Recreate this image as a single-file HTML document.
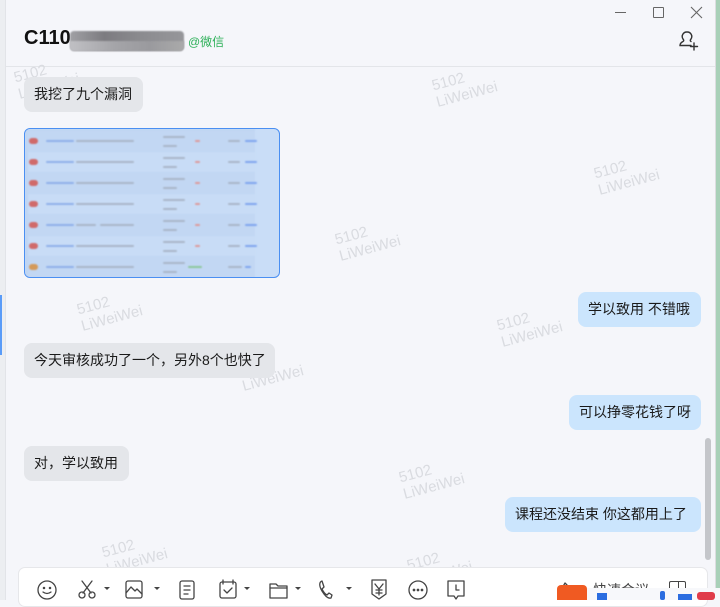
<!DOCTYPE html>
<html><head><meta charset="utf-8"><style>
*{margin:0;padding:0;box-sizing:border-box}
body{width:720px;height:600px;overflow:hidden;background:#f5f6fa;position:relative;font-family:"Liberation Sans","Noto Sans CJK SC",sans-serif}
.abs{position:absolute}
.b{position:absolute;height:35px;line-height:35px;padding:0 10px;font-size:14px;color:#1a1a1a;border-radius:8px;white-space:nowrap}
.l{background:#e4e6ea;left:24px}
.r{background:#cbe5fd;right:19px}
.wm{position:absolute;color:#d9dbe0;font-size:15px;line-height:17px;transform:rotate(-15deg);transform-origin:left top;font-family:"Liberation Sans",sans-serif}
.row{position:absolute;left:3px;width:227px;height:20px}
.row span{position:absolute;height:2px;top:9px;border-radius:1px}
.blur{filter:blur(0.7px)}
</style></head><body>
<div class="abs" style="left:0;top:0;width:6px;height:600px;background:#eceef1;border-right:1px solid #e2e4e8"></div>
<div class="abs" style="left:0;top:295px;width:2px;height:60px;background:#5a9cf8"></div>
<div class="abs" style="left:716px;top:0;width:4px;height:600px;background:#a8d0b8"></div>
<div class="abs" style="left:715px;top:0;width:1px;height:600px;background:#dcdde0"></div>

<div class="abs" style="left:615px;top:12px;width:11px;height:1px;background:#666"></div>
<div class="abs" style="left:653px;top:7px;width:11px;height:11px;border:1px solid #666;border-radius:1px"></div>
<svg class="abs" style="left:690px;top:6px" width="13" height="13"><path d="M1 1L12 12M12 1L1 12" stroke="#666" stroke-width="1.1"/></svg>
<svg class="abs" style="left:678px;top:30px" width="24" height="22" viewBox="0 0 24 22"><path d="M9 2a4.5 4.5 0 0 1 4 7c-1 1.2-1 2 0 2.5M9 2a4.5 4.5 0 0 0-4 7c1 1.2 1 2 0 2.5C3 12.5 2 14 2 15.5H13M16 13v7M12.5 16.5h7" stroke="#333" stroke-width="1.4" fill="none" stroke-linecap="round"/></svg>

<div class="abs" style="left:24px;top:27px;font-size:20px;font-weight:bold;color:#111">C110</div>
<div class="abs blur" style="left:70px;top:31px;width:114px;height:20px;background:linear-gradient(90deg,#a0a0a4,#7c7b80 30%,#8a8a8e 60%,#96969a);border-radius:4px"></div>
<div class="abs blur" style="left:70px;top:41px;width:114px;height:10px;background:linear-gradient(90deg,#c0c0c4,#a4a4a8 40%,#9a9a9e 70%,#aaa);border-radius:0 0 4px 4px"></div>
<div class="abs" style="left:188px;top:33px;font-size:12px;color:#2db058">@微信</div>
<div class="abs" style="left:6px;top:66px;width:709px;height:1px;background:#e3e5e9"></div>

<div class="wm" style="left:430px;top:78px">5102<br>LiWeiWei</div>
<div class="wm" style="left:592px;top:166px">5102<br>LiWeiWei</div>
<div class="wm" style="left:333px;top:232px">5102<br>LiWeiWei</div>
<div class="wm" style="left:75px;top:302px">5102<br>LiWeiWei</div>
<div class="wm" style="left:495px;top:318px">5102<br>LiWeiWei</div>
<div class="wm" style="left:236px;top:362px">5102<br>LiWeiWei</div>
<div class="wm" style="left:397px;top:470px">5102<br>LiWeiWei</div>
<div class="wm" style="left:100px;top:545px">5102<br>LiWeiWei</div>
<div class="wm" style="left:405px;top:558px">5102<br>LiWeiWei</div>
<div class="wm" style="left:12px;top:70px">5102<br>LiWeiWei</div>

<div class="b l" style="top:77px;width:119px">我挖了九个漏洞</div>

<div class="abs" style="left:24px;top:128px;width:256px;height:150px;background:#c9ddf7;border:1.5px solid #4a8ff2;border-radius:6px;overflow:hidden">
 <div class="blur abs" style="left:0;top:0;width:256px;height:150px">
 <div class="abs" style="left:0;top:0;width:230px;height:150px;background:#bfd5f2"></div>
 <div class="row" style="top:2px;background:#c2d7f3"><span style="left:1px;width:9px;height:6px;top:7px;background:#d06a6a;border-radius:3px"></span><span style="left:18px;width:28px;background:#8fb0ea"></span><span style="left:48px;width:26px;background:#a9b6c8"></span><span style="left:72px;width:34px;background:#a9b6c8"></span><span style="left:135px;width:22px;top:5px;background:#a9b6c8"></span><span style="left:135px;width:14px;top:14px;background:#a9b6c8"></span><span style="left:167px;width:5px;background:#d99"></span><span style="left:200px;width:12px;background:#a9b6c8"></span><span style="left:217px;width:12px;background:#7fa5ee"></span></div>
 <div class="row" style="top:23px;background:#c8dcf6"><span style="left:1px;width:9px;height:6px;top:7px;background:#d06a6a;border-radius:3px"></span><span style="left:18px;width:28px;background:#8fb0ea"></span><span style="left:48px;width:26px;background:#a9b6c8"></span><span style="left:72px;width:34px;background:#a9b6c8"></span><span style="left:135px;width:22px;top:5px;background:#a9b6c8"></span><span style="left:135px;width:14px;top:14px;background:#a9b6c8"></span><span style="left:167px;width:5px;background:#d99"></span><span style="left:200px;width:12px;background:#a9b6c8"></span><span style="left:217px;width:12px;background:#7fa5ee"></span></div>
 <div class="row" style="top:44px;background:#c2d7f3"><span style="left:1px;width:9px;height:6px;top:7px;background:#d06a6a;border-radius:3px"></span><span style="left:18px;width:28px;background:#8fb0ea"></span><span style="left:48px;width:26px;background:#a9b6c8"></span><span style="left:72px;width:34px;background:#a9b6c8"></span><span style="left:135px;width:22px;top:5px;background:#a9b6c8"></span><span style="left:135px;width:14px;top:14px;background:#a9b6c8"></span><span style="left:167px;width:5px;background:#d99"></span><span style="left:200px;width:12px;background:#a9b6c8"></span><span style="left:217px;width:12px;background:#7fa5ee"></span></div>
 <div class="row" style="top:65px;background:#c8dcf6"><span style="left:1px;width:9px;height:6px;top:7px;background:#d06a6a;border-radius:3px"></span><span style="left:18px;width:28px;background:#8fb0ea"></span><span style="left:48px;width:26px;background:#a9b6c8"></span><span style="left:72px;width:34px;background:#a9b6c8"></span><span style="left:135px;width:22px;top:5px;background:#a9b6c8"></span><span style="left:135px;width:14px;top:14px;background:#a9b6c8"></span><span style="left:167px;width:5px;background:#d99"></span><span style="left:200px;width:12px;background:#a9b6c8"></span><span style="left:217px;width:12px;background:#7fa5ee"></span></div>
 <div class="row" style="top:86px;background:#c2d7f3"><span style="left:1px;width:9px;height:6px;top:7px;background:#d06a6a;border-radius:3px"></span><span style="left:18px;width:28px;background:#8fb0ea"></span><span style="left:48px;width:20px;background:#a9b6c8"></span><span style="left:72px;width:34px;background:#a9b6c8"></span><span style="left:135px;width:22px;top:5px;background:#a9b6c8"></span><span style="left:135px;width:14px;top:14px;background:#a9b6c8"></span><span style="left:167px;width:5px;background:#d99"></span><span style="left:200px;width:12px;background:#a9b6c8"></span><span style="left:217px;width:12px;background:#7fa5ee"></span></div>
 <div class="row" style="top:107px;background:#c8dcf6"><span style="left:1px;width:9px;height:6px;top:7px;background:#d06a6a;border-radius:3px"></span><span style="left:18px;width:28px;background:#8fb0ea"></span><span style="left:48px;width:26px;background:#a9b6c8"></span><span style="left:72px;width:34px;background:#a9b6c8"></span><span style="left:135px;width:22px;top:5px;background:#a9b6c8"></span><span style="left:135px;width:14px;top:14px;background:#a9b6c8"></span><span style="left:167px;width:5px;background:#d99"></span><span style="left:200px;width:12px;background:#a9b6c8"></span><span style="left:217px;width:12px;background:#7fa5ee"></span></div>
 <div class="row" style="top:128px;background:#c2d7f3"><span style="left:1px;width:9px;height:6px;top:7px;background:#d49a5a;border-radius:3px"></span><span style="left:18px;width:28px;background:#8fb0ea"></span><span style="left:48px;width:26px;background:#a9b6c8"></span><span style="left:72px;width:34px;background:#a9b6c8"></span><span style="left:135px;width:22px;top:5px;background:#a9b6c8"></span><span style="left:135px;width:14px;top:14px;background:#a9b6c8"></span><span style="left:160px;width:14px;background:#8cc79a"></span><span style="left:200px;width:14px;background:#a9b6c8"></span><span style="left:217px;width:6px;background:#7fa5ee"></span></div>
 </div>
</div>

<div class="b r" style="top:292px;width:123px">学以致用 不错哦</div>
<div class="b l" style="top:343px;width:251px">今天审核成功了一个，另外8个也快了</div>
<div class="b r" style="top:395px;width:132px">可以挣零花钱了呀</div>
<div class="b l" style="top:446px;width:105px">对，学以致用</div>
<div class="b r" style="top:497px;width:196px">课程还没结束 你这都用上了</div>

<div class="abs" style="left:705px;top:438px;width:6px;height:122px;background:#c4c6ca;border-radius:3px"></div>

<div class="abs" style="left:18px;top:567px;width:690px;height:40px;background:#fff;border:1px solid #e6e7ea;border-radius:7px"></div>
<svg class="abs" style="left:30px;top:576px" width="640" height="24" viewBox="0 0 640 24" fill="none" stroke="#444" stroke-width="1.3" stroke-linecap="round" stroke-linejoin="round">
 <circle cx="17" cy="14" r="9"/><circle cx="14" cy="12" r=".6" fill="#444"/><circle cx="20" cy="12" r=".6" fill="#444"/><path d="M13 16q4 3 8 0"/>
 <path d="M52 5l9 12M62 5l-9 12"/><circle cx="52" cy="19" r="3"/><circle cx="62" cy="19" r="3"/>
 <path d="M74 11l3 3 3-3z" fill="#444" stroke="none"/>
 <rect x="96" y="5" width="16" height="17" rx="2"/><path d="M96 17l5-6 4 4 2-2 5 5"/>
 <path d="M124 11l3 3 3-3z" fill="#444" stroke="none"/>
 <rect x="150" y="5" width="14" height="18" rx="2"/><path d="M154 10h6M154 14h6M154 18h4"/>
 <rect x="190" y="6" width="16" height="16" rx="2"/><path d="M193 4v4M203 4v4M194 14l3 3 5-5"/>
 <path d="M214 11l3 3 3-3z" fill="#444" stroke="none"/>
 <path d="M240 8h6l2 2h9v12h-17z"/><path d="M240 12h17"/>
 <path d="M265 11l3 3 3-3z" fill="#444" stroke="none"/>
 <path d="M292 5c-3 1-3 5 0 10s6 8 9 7l1-3-3-2-2 2c-2-1-4-4-5-6l2-2-1-3z"/>
 <path d="M316 11l3 3 3-3z" fill="#444" stroke="none"/>
 <path d="M342 4h14v14l-7 5-7-5z"/><path d="M345 8l4 5 4-5M349 13v6M346 14h6M346 17h6"/>
 <circle cx="388" cy="14" r="9"/><circle cx="384" cy="14" r=".7" fill="#444"/><circle cx="388" cy="14" r=".7" fill="#444"/><circle cx="392" cy="14" r=".7" fill="#444"/>
 <path d="M418 5h16v15h-6l-2 3-2-3h-6z"/><path d="M426 9v5h3"/>
 <path d="M530 16l5-9 2 2"/>
 <rect x="640" y="5" width="16" height="16" rx="2"/>
</svg>
<div class="abs" style="left:593px;top:580px;font-size:14px;color:#444">快速会议</div>
<div class="abs" style="left:669px;top:581px;width:17px;height:16px;border:1.3px solid #444;border-radius:2px"></div>
<div class="abs" style="left:678px;top:581px;width:1.3px;height:16px;background:#444"></div>
<div class="abs" style="left:560px;top:588px;width:160px;height:12px;background:#f7f8fb"></div>
<div class="abs" style="left:557px;top:585px;width:30px;height:15px;background:#f05a22;border-radius:4px 4px 0 0"></div>
<div class="abs" style="left:597px;top:593px;width:10px;height:7px;background:#2b6de0"></div>
<div class="abs" style="left:660px;top:591px;width:5px;height:9px;background:#2b6de0;border-radius:2px"></div>
<div class="abs" style="left:678px;top:594px;width:14px;height:6px;background:#2b6de0"></div>
<div class="abs" style="left:697px;top:592px;width:18px;height:8px;background:#e03c4a;border-radius:3px"></div>
</body></html>
